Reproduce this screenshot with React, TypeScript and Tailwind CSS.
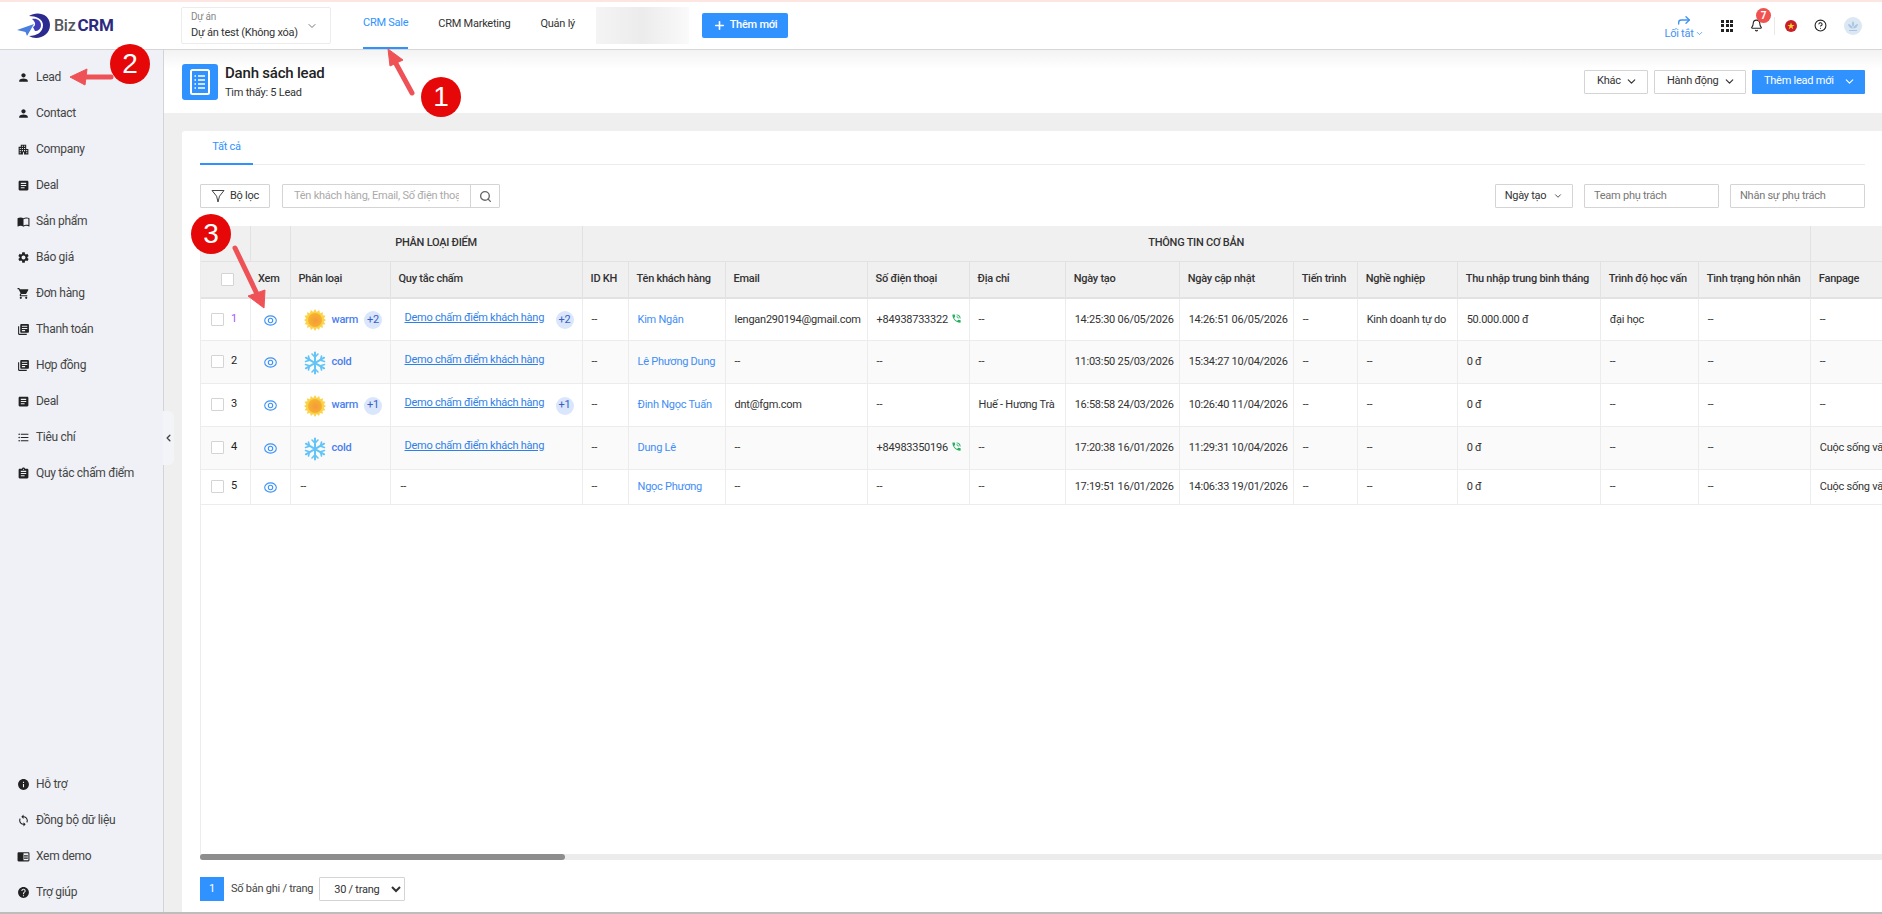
import type { ReactNode } from 'react'
import { ChevronDown, ChevronLeft, Plus, Search, Forward, Bell, CircleHelp } from 'lucide-react'
import {
  MdPerson,
  MdApartment,
  MdArticle,
  MdImportContacts,
  MdSettings,
  MdShoppingCart,
  MdLibraryBooks,
  MdFormatListBulleted,
  MdAssignment,
  MdInfo,
  MdSync,
  MdHelp,
  MdChromeReaderMode,
  MdPhoneInTalk,
} from 'react-icons/md'

const topMenu = [
  { icon: MdPerson, label: 'Lead' },
  { icon: MdPerson, label: 'Contact' },
  { icon: MdApartment, label: 'Company' },
  { icon: MdArticle, label: 'Deal' },
  { icon: MdImportContacts, label: 'Sản phẩm' },
  { icon: MdSettings, label: 'Báo giá' },
  { icon: MdShoppingCart, label: 'Đơn hàng' },
  { icon: MdLibraryBooks, label: 'Thanh toán' },
  { icon: MdLibraryBooks, label: 'Hợp đồng' },
  { icon: MdArticle, label: 'Deal' },
  { icon: MdFormatListBulleted, label: 'Tiêu chí' },
  { icon: MdAssignment, label: 'Quy tắc chấm điểm' },
]

const bottomMenu = [
  { icon: MdInfo, label: 'Hỗ trợ' },
  { icon: MdSync, label: 'Đồng bộ dữ liệu' },
  { icon: MdChromeReaderMode, label: 'Xem demo' },
  { icon: MdHelp, label: 'Trợ giúp' },
]

const columns = [
  { label: 'Xem', width: 'w-[40px]' },
  { label: 'Phân loại', width: 'w-[100px]' },
  { label: 'Quy tắc chấm', width: 'w-[192px]' },
  { label: 'ID KH', width: 'w-[46px]' },
  { label: 'Tên khách hàng', width: 'w-[97px]' },
  { label: 'Email', width: 'w-[142px]' },
  { label: 'Số điện thoại', width: 'w-[102px]' },
  { label: 'Địa chỉ', width: 'w-[96px]' },
  { label: 'Ngày tạo', width: 'w-[114px]' },
  { label: 'Ngày cập nhật', width: 'w-[114px]' },
  { label: 'Tiến trình', width: 'w-[64px]' },
  { label: 'Nghề nghiệp', width: 'w-[100px]' },
  { label: 'Thu nhập trung bình tháng', width: 'w-[143px]' },
  { label: 'Trình độ học vấn', width: 'w-[98px]' },
  { label: 'Tình trạng hôn nhân', width: 'w-[112px]' },
  { label: 'Fanpage', width: 'w-[200px]' },
]

const rows = [
  {
    id: 1, type: 'warm', typeMore: '+2', rule: true, ruleMore: '+2', name: 'Kim Ngân', email: 'lengan290194@gmail.com',
    phone: '+84938733322', address: '--', created: '14:25:30 06/05/2026', updated: '14:26:51 06/05/2026',
    job: 'Kinh doanh tự do', income: '50.000.000 đ', edu: 'đại học', fanpage: '--', height: 'h-[42px]',
  },
  {
    id: 2, type: 'cold', typeMore: '', rule: true, ruleMore: '', name: 'Lê Phương Dung', email: '--',
    phone: '--', address: '--', created: '11:03:50 25/03/2026', updated: '15:34:27 10/04/2026',
    job: '--', income: '0 đ', edu: '--', fanpage: '--', height: 'h-[43px]',
  },
  {
    id: 3, type: 'warm', typeMore: '+1', rule: true, ruleMore: '+1', name: 'Đinh Ngọc Tuấn', email: 'dnt@fgm.com',
    phone: '--', address: 'Huế - Hương Trà', created: '16:58:58 24/03/2026', updated: '10:26:40 11/04/2026',
    job: '--', income: '0 đ', edu: '--', fanpage: '--', height: 'h-[43px]',
  },
  {
    id: 4, type: 'cold', typeMore: '', rule: true, ruleMore: '', name: 'Dung Lê', email: '--',
    phone: '+84983350196', address: '--', created: '17:20:38 16/01/2026', updated: '11:29:31 10/04/2026',
    job: '--', income: '0 đ', edu: '--', fanpage: 'Cuộc sống văn minh', height: 'h-[43px]',
  },
  {
    id: 5, type: '', typeMore: '', rule: false, ruleMore: '', name: 'Ngọc Phương', email: '--',
    phone: '--', address: '--', created: '17:19:51 16/01/2026', updated: '14:06:33 19/01/2026',
    job: '--', income: '0 đ', edu: '--', fanpage: 'Cuộc sống văn minh', height: 'h-[35px]',
  },
]

const LogoMark = () => (
  <svg width="35" height="26" viewBox="0 0 35 26" fill="none">
    <path d="M12 3 C 19 -2, 33 0, 33 12 C 33 23, 20 28, 12 23 C 20 23, 26 19, 26 12 C 26 6, 19 3, 12 3 Z" fill="#2b2a8f" />
    <path d="M15 6 C 20 5, 24 8, 24 12 C 24 16, 21 18, 18 18 L 16 14 C 19 13, 19 9, 15 6 Z" fill="#3f3db8" />
    <path d="M0 17 L 17 11 L 10 23 L 8.5 19 Z" fill="#4a7fe0" />
  </svg>
)

const EyeIcon = () => (
  <svg width="13" height="11" viewBox="0 0 13 11" fill="none" stroke="#3f93f5" strokeWidth="1.1">
    <ellipse cx="6.5" cy="5.5" rx="5.8" ry="4.6" />
    <circle cx="6.5" cy="5.5" r="2.2" />
  </svg>
)

const SunIcon = () => (
  <svg width="22" height="22" viewBox="0 0 22 22">
    <defs>
      <radialGradient id="sunCore" cx="0.55" cy="0.55" r="0.6">
        <stop offset="0" stopColor="#f59a3c" />
        <stop offset="1" stopColor="#f7b52c" />
      </radialGradient>
    </defs>
    <polygon
      points="11,0 12.8,3 15.2,1 16,4.2 19,3.2 18.6,6.2 21.6,6.8 19.8,9.4 22,11 19.8,12.8 21.4,15.2 18.4,15.8 19,18.8 16,18 15,21 12.8,19 11,22 9.2,19 7,21 6,18 3,18.8 3.6,15.8 0.6,15.2 2.2,12.8 0,11 2.2,9.4 0.4,6.8 3.4,6.2 3,3.2 6,4.2 6.8,1 9.2,3"
      fill="#fbd34a"
    />
    <circle cx="11" cy="11" r="7" fill="url(#sunCore)" />
  </svg>
)

const SnowIcon = () => (
  <svg width="24" height="24" viewBox="0 0 24 24" fill="none" stroke="#63c4f6" strokeWidth="2" strokeLinecap="round">
    <path d="M12 1.5V22.5M2.9 6.7L21.1 17.3M2.9 17.3L21.1 6.7" />
    <path d="M9 3L12 6L15 3M9 21L12 18L15 21" strokeWidth="1.6" />
    <path d="M2.5 10.5L6.5 9.2L5.5 5M21.5 13.5L17.5 14.8L18.5 19M2.5 13.5L6.5 14.8L5.5 19M21.5 10.5L17.5 9.2L18.5 5" strokeWidth="1.6" />
  </svg>
)

const GridIcon = () => (
  <div className="grid h-3 w-3 grid-cols-3 gap-[1.5px]">
    {Array.from({ length: 9 }).map((_, i) => (
      <span key={i} className="bg-[#222]" />
    ))}
  </div>
)

const FunnelIcon = () => (
  <svg width="14" height="14" viewBox="0 0 14 14" fill="none" stroke="#444" strokeWidth="1">
    <path d="M1 1.5H13L8.5 7.2L7 13L5.6 7.2Z" strokeLinejoin="round" />
  </svg>
)

const VnFlag = () => (
  <svg width="12" height="12" viewBox="0 0 12 12">
    <circle cx="6" cy="6" r="6" fill="#c8202a" />
    <polygon points="6,2.4 6.9,5 9.6,5 7.4,6.6 8.2,9.2 6,7.6 3.8,9.2 4.6,6.6 2.4,5 5.1,5" fill="#f8d22c" />
  </svg>
)

const ListDocIcon = () => (
  <svg width="20" height="26" viewBox="0 0 20 26" fill="none" stroke="#fff">
    <rect x="1" y="1" width="18" height="24" rx="1.5" strokeWidth="2" />
    <path d="M8 7H15M8 11H15M8 15H15M8 19H15M4.5 7H6M4.5 11H6M4.5 15H6M4.5 19H6" strokeWidth="1.6" />
  </svg>
)

const Avatar = () => (
  <svg width="18" height="18" viewBox="0 0 18 18">
    <circle cx="9" cy="9" r="9" fill="#dbe7f3" />
    <path d="M9 4C10.5 6 10.5 8 9 10C7.5 8 7.5 6 9 4ZM4 7C6 7 8 8.5 9 11.5C6.5 11.5 4.5 10 4 7ZM14 7C12 7 10 8.5 9 11.5C11.5 11.5 13.5 10 14 7ZM5 13H13V14H5Z" fill="#a9c6e2" />
  </svg>
)

const Checkbox = ({ className }: { className: string }) => (
  <span className={`block rounded-[1px] border border-[#d4d4d4] bg-white ${className}`} />
)

const MorePill = ({ value }: { value: string }) => (
  <span className="flex h-[18px] w-[18px] shrink-0 items-center justify-center rounded-full bg-[#d9e6fb] text-[#3a5fc4]">{value}</span>
)

const OutlineButton = ({ children, className }: { children: ReactNode; className: string }) => (
  <button className={`flex h-6 items-center justify-between rounded-[1px] border border-[#d4d4d4] bg-white whitespace-nowrap text-[#333] ${className}`}>
    {children}
  </button>
)

const SideItem = ({ icon: Icon, label }: { icon: typeof MdPerson; label: string }) => (
  <div className="flex h-9 items-center gap-[6px] pl-[17px] text-[#444]">
    <Icon size={13} className="shrink-0 text-[#222]" />
    <span>{label}</span>
  </div>
)

const Cell = ({ children }: { children: ReactNode }) => (
  <td className="overflow-hidden border-r border-b border-[#ececec] pt-[2px] pl-[9px] whitespace-nowrap">{children}</td>
)

const NumberBadge = ({ value, className }: { value: number; className: string }) => (
  <div
    className={`absolute flex h-10 w-10 items-center justify-center rounded-full bg-[#e60808] font-['Liberation_Sans',sans-serif] text-[28px] tracking-normal text-white ${className}`}
  >
    {value}
  </div>
)

const Annotations = () => (
  <svg className="pointer-events-none absolute top-0 left-0" width="1882" height="914" fill="#ee5257" stroke="#ee5257">
    <path d="M412 93L394 60" strokeWidth="5" strokeLinecap="round" />
    <polygon points="388,49 403,60 390,66" strokeWidth="1" />
    <path d="M111 77L82 77" strokeWidth="5" strokeLinecap="round" />
    <polygon points="70,77 87,69 85,85" strokeWidth="1" />
    <path d="M235 248L257 294" strokeWidth="5" strokeLinecap="round" />
    <polygon points="264,308 248,296 265,290" strokeWidth="1" />
  </svg>
)

const App = () => {
  return (
    <div className="relative flex h-[914px] w-[1882px] flex-col overflow-hidden bg-white font-['Roboto',sans-serif] text-[11px] tracking-[-0.25px] text-[#333]">
      <div className="h-[2px] shrink-0 bg-[#fde6e1]" />

      {/* Header */}
      <header className="flex h-[48px] shrink-0 items-stretch border-b border-[#d6d6d6] bg-white">
        <div className="flex w-[181px] items-center gap-[2px] pl-[17px]">
          <LogoMark />
          <span className="text-[16px] leading-none font-medium text-[#55565c]">Biz</span>
          <span className="text-[17px] leading-none font-bold text-[#2b2a7f]">CRM</span>
        </div>
        <div className="my-[5px] flex w-[150px] items-center justify-between rounded-[2px] border border-[#ececec] pr-[12px] pl-[9px]">
          <div className="whitespace-nowrap">
            <div className="text-[10px] leading-[14px] text-[#888]">Dự án</div>
            <div className="leading-[18px] text-[#333]">Dự án test (Không xóa)</div>
          </div>
          <ChevronDown size={12} className="text-[#777]" />
        </div>
        <nav className="ml-8 flex gap-[30px] whitespace-nowrap">
          <a className="flex h-[47px] items-center border-b-[2px] border-[#3092ff] pb-[2px] text-[#3092ff]">CRM Sale</a>
          <a className="flex items-center pb-[2px]">CRM Marketing</a>
          <a className="flex items-center pb-[2px]">Quản lý</a>
        </nav>
        <div className="my-[5px] ml-[21px] w-[93px] bg-gradient-to-r from-[#f4f4f4] via-[#ececec] to-[#fafafa]" />
        <button className="my-[11px] ml-[13px] flex w-[86px] items-center justify-center gap-1 rounded-[2px] bg-[#3092ff] font-medium whitespace-nowrap text-white">
          <Plus size={13} strokeWidth={3} />
          Thêm mới
        </button>
        <div className="ml-auto flex items-center pr-[20px]">
          <div className="flex w-[36px] flex-col items-center">
            <Forward size={16} className="text-[#3f93f5]" />
            <div className="flex items-center gap-[1px] leading-none whitespace-nowrap text-[#3f93f5]">
              Lối tắt
              <ChevronDown size={9} />
            </div>
          </div>
          <div className="ml-[19px]">
            <GridIcon />
          </div>
          <div className="relative ml-[17px]">
            <Bell size={13} className="text-[#222]" />
            <span className="absolute -top-[11px] left-[6px] flex h-[15px] w-[15px] items-center justify-center rounded-full bg-[#f0524f] text-[10px] font-bold text-white">
              7
            </span>
          </div>
          <div className="ml-[11px] h-[18px] border-l border-[#e8e8e8]" />
          <div className="ml-[10px]">
            <VnFlag />
          </div>
          <CircleHelp size={13} className="ml-[17px] text-[#222]" />
          <div className="ml-[17px]">
            <Avatar />
          </div>
        </div>
      </header>

      <div className="relative flex min-h-0 flex-1">
        {/* Sidebar */}
        <aside className="flex w-[164px] shrink-0 flex-col justify-between border-r border-[#d2d4d8] bg-[#eff1f6] pt-[9px] pb-[2px] text-xs tracking-[-0.3px]">
          <div>
            {topMenu.map((item, i) => (
              <SideItem key={i} icon={item.icon} label={item.label} />
            ))}
          </div>
          <div>
            {bottomMenu.map((item, i) => (
              <SideItem key={i} icon={item.icon} label={item.label} />
            ))}
          </div>
        </aside>
        <div className="absolute top-[361px] left-[163px] flex h-[54px] w-[11px] items-center justify-center rounded-r-[6px] bg-[#f3f4f7]">
          <ChevronLeft size={12} strokeWidth={3} className="text-[#444]" />
        </div>

        <main className="flex min-w-0 flex-1 flex-col bg-[#efefef]">
          {/* Page title */}
          <div className="flex h-[63px] shrink-0 items-center justify-between bg-gradient-to-b from-[#f3f3f3] to-white to-30% pr-[17px] pl-[18px]">
            <div className="flex items-center gap-[7px]">
              <div className="flex h-9 w-9 items-center justify-center rounded-[3px] bg-[#3092ff]">
                <ListDocIcon />
              </div>
              <div>
                <h1 className="text-[15px] leading-[20px] font-medium tracking-[-0.2px] text-[#222]">Danh sách lead</h1>
                <p className="mt-[2px] leading-[16px]">Tìm thấy: 5 Lead</p>
              </div>
            </div>
            <div className="flex gap-[6px]">
              <OutlineButton className="w-[64px] pr-[9px] pl-[12px]">
                Khác <ChevronDown size={13} strokeWidth={2.2} />
              </OutlineButton>
              <OutlineButton className="w-[92px] pr-[9px] pl-[12px]">
                Hành động <ChevronDown size={13} strokeWidth={2.2} />
              </OutlineButton>
              <button className="flex h-6 w-[113px] items-center justify-between rounded-[1px] bg-[#3092ff] pr-[9px] pl-[12px] whitespace-nowrap text-white">
                Thêm lead mới <ChevronDown size={13} />
              </button>
            </div>
          </div>

          {/* Card */}
          <section className="mt-[18px] ml-[18px] flex min-h-0 flex-1 flex-col rounded-tl-[3px] bg-white pl-[18px]">
            <div className="mr-[17px] flex h-[34px] shrink-0 border-b border-[#ececec]">
              <a className="-mb-px flex w-[53px] items-center justify-center border-b-[2px] border-[#3092ff] text-[#3092ff]">Tất cả</a>
            </div>

            <div className="mt-[19px] mr-[17px] flex h-6 shrink-0 items-stretch">
              <OutlineButton className="w-[70px] justify-center gap-[5px]">
                <FunnelIcon />
                Bộ lọc
              </OutlineButton>
              <div className="ml-3 flex w-[218px] rounded-[1px] border border-[#d4d4d4]">
                <input
                  className="w-[188px] border-r border-[#d4d4d4] px-[11px] outline-none placeholder:text-[#aaa]"
                  placeholder="Tên khách hàng, Email, Số điện thoại"
                />
                <div className="flex flex-1 items-center justify-center">
                  <Search size={13} strokeWidth={2.5} className="text-[#666]" />
                </div>
              </div>
              <OutlineButton className="ml-auto w-[78px] justify-center gap-[7px]">
                Ngày tạo <ChevronDown size={10} />
              </OutlineButton>
              <input
                className="ml-[11px] w-[135px] rounded-[1px] border border-[#d4d4d4] px-[9px] outline-none placeholder:text-[#777]"
                placeholder="Team phụ trách"
              />
              <input
                className="ml-[11px] w-[135px] rounded-[1px] border border-[#d4d4d4] px-[9px] outline-none placeholder:text-[#777]"
                placeholder="Nhân sự phụ trách"
              />
            </div>

            {/* Table */}
            <div className="mt-[18px] min-h-0 flex-1 overflow-hidden border-l border-[#ececec]">
              <table className="w-[1810px] table-fixed border-collapse">
                <colgroup>
                  <col className="w-[49px]" />
                  {columns.map((col) => (
                    <col key={col.label} className={col.width} />
                  ))}
                </colgroup>
                <thead className="bg-[#f0f0f0] font-medium text-[#333]">
                  <tr className="h-[35px]">
                    <th className="border-r border-b border-[#e2e2e2]" />
                    <th className="border-r border-b border-[#e2e2e2]" />
                    <th colSpan={2} className="border-r border-b border-[#e2e2e2] font-medium">
                      PHÂN LOẠI ĐIỂM
                    </th>
                    <th colSpan={12} className="border-r border-b border-[#e2e2e2] font-medium">
                      THÔNG TIN CƠ BẢN
                    </th>
                    <th className="border-b border-[#e2e2e2]" />
                  </tr>
                  <tr className="h-[37px]">
                    <th className="border-b-[2px] border-[#e2e2e2]">
                      <Checkbox className="ml-[20px] h-[13px] w-[13px]" />
                    </th>
                    {columns.map((col) => (
                      <th
                        key={col.label}
                        className="overflow-hidden border-r border-b-[2px] border-[#e2e2e2] px-2 text-left font-medium whitespace-nowrap"
                      >
                        {col.label}
                      </th>
                    ))}
                  </tr>
                </thead>
                <tbody>
                  {rows.map((row) => (
                    <tr key={row.id} className={`${row.height} ${row.id % 2 === 0 ? 'bg-[#fafafa]' : 'bg-white'}`}>
                      <td className="border-r border-b border-[#ececec]">
                        <div className="flex items-center gap-[7px] pl-[10px]">
                          <Checkbox className="h-[13px] w-[13px]" />
                          <span className={row.id === 1 ? 'text-[#a855f7]' : 'text-[#222]'}>{row.id}</span>
                        </div>
                      </td>
                      <td className="border-r border-b border-[#ececec] pt-[2px]">
                        <div className="flex justify-center">
                          <EyeIcon />
                        </div>
                      </td>
                      <td className="border-r border-b border-[#ececec] pt-[2px]">
                        {row.type ? (
                          <div className="flex items-center pl-2 font-medium text-[#4a7ff0]">
                            <div className="flex w-[33px] shrink-0 items-center justify-center">
                              {row.type === 'warm' ? <SunIcon /> : <SnowIcon />}
                            </div>
                            <span>{row.type}</span>
                            {row.typeMore && <span className="ml-[6px] font-normal"><MorePill value={row.typeMore} /></span>}
                          </div>
                        ) : (
                          <span className="pl-[10px]">--</span>
                        )}
                      </td>
                      <td className="border-r border-b border-[#ececec] pt-[2px]">
                        {row.rule ? (
                          <div className="flex items-center pl-[14px]">
                            <a className="relative -top-[2px] w-[141px] shrink-0 whitespace-nowrap text-[#2f7fe8] underline">Demo chấm điểm khách hàng</a>
                            {row.ruleMore && <span className="ml-[10px]"><MorePill value={row.ruleMore} /></span>}
                          </div>
                        ) : (
                          <span className="pl-[10px]">--</span>
                        )}
                      </td>
                      <Cell>--</Cell>
                      <Cell>
                        <span className="text-[#3f8ef5]">{row.name}</span>
                      </Cell>
                      <Cell>{row.email}</Cell>
                      <Cell>
                        <span className="flex items-center gap-[3px]">
                          {row.phone}
                          {row.phone !== '--' && <MdPhoneInTalk size={11} className="relative -top-[2px] shrink-0 text-[#27ae60]" />}
                        </span>
                      </Cell>
                      <Cell>{row.address}</Cell>
                      <Cell>{row.created}</Cell>
                      <Cell>{row.updated}</Cell>
                      <Cell>--</Cell>
                      <Cell>{row.job}</Cell>
                      <Cell>{row.income}</Cell>
                      <Cell>{row.edu}</Cell>
                      <Cell>--</Cell>
                      <Cell>{row.fanpage}</Cell>
                    </tr>
                  ))}
                </tbody>
              </table>
            </div>

            {/* Scroll bar */}
            <div className="h-[6px] shrink-0 bg-[#ececec]">
              <div className="h-full w-[365px] rounded-full bg-[#8d8d8d]" />
            </div>

            {/* Pagination */}
            <div className="mt-[17px] mb-[11px] flex h-6 shrink-0 items-center">
              <span className="flex h-6 w-6 items-center justify-center bg-[#3092ff] text-white">1</span>
              <span className="ml-[7px] text-[#444]">Số bản ghi / trang</span>
              <select className="ml-[6px] h-6 w-[86px] rounded-[1px] border border-[#d4d4d4] bg-white pl-[10px]">
                <option>30 / trang</option>
              </select>
            </div>
          </section>
        </main>
      </div>

      <div className="h-[2px] shrink-0 bg-[#bdbdbd]" />

      {/* Annotations */}
      <Annotations />
      <NumberBadge value={1} className="top-[77px] left-[421px]" />
      <NumberBadge value={2} className="top-[44px] left-[110px]" />
      <NumberBadge value={3} className="top-[214px] left-[191px]" />
    </div>
  )
}

export default App
